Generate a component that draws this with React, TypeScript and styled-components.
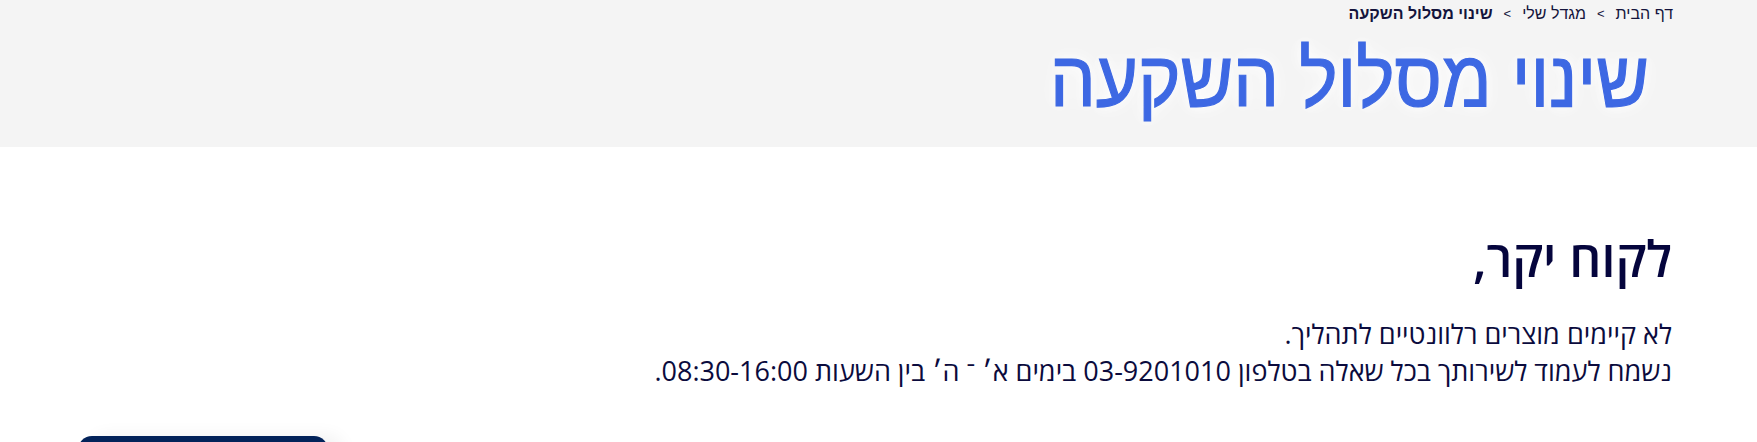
import styled, { createGlobalStyle } from 'styled-components';

const GlobalStyle = createGlobalStyle`
body {
  margin: 0;
  direction: rtl;
  background: #ffffff;
  font-family: "Open Sans", "Liberation Sans", sans-serif;
  color: #0b0b3d;
}
`;

const HeaderStyle = styled.header`
height: 147px;
padding: 0 84px;
background: #f4f4f4;
box-sizing: border-box;
overflow: hidden;
`;

const BreadcrumbsStyle = styled.nav`
display: flex;
align-items: center;
gap: 11px;
padding-top: 4px;
font-family: "Liberation Sans", sans-serif;
font-size: 16px;
line-height: 20px;
color: #14143c;
`;

const CrumbStyle = styled.span<{ $current?: boolean }>`
font-weight: ${({ $current }) => ($current ? 700 : 400)};
`;

const SeparatorStyle = styled.span`
font-size: 13px;
`;

const PageTitleStyle = styled.h1`
margin: 10px 24px 0 0;
font-family: "Liberation Sans", sans-serif;
font-size: 79px;
font-weight: 400;
line-height: 90px;
color: #3d68e3;
-webkit-text-stroke: 1.2px #3d68e3;
text-shadow: 0 0 12px #ffffff, 0 0 22px #ffffff;
transform: scaleX(0.915);
transform-origin: right center;
`;

const MainStyle = styled.main`
padding: 0 85px 0 78px;
`;

const GreetingStyle = styled.h2`
margin: 78px 0 0;
font-size: 50px;
font-weight: 600;
line-height: 66px;
color: #05053d;
`;

const MessageStyle = styled.div`
margin-top: 24px;
font-size: 27px;
line-height: 37px;
`;

const ButtonRowStyle = styled.div`
display: flex;
justify-content: flex-end;
margin-top: 47px;
`;

const ButtonStyle = styled.button`
box-sizing: border-box;
width: 250px;
height: 56px;
border: none;
border-radius: 14px;
background: #03235a;
color: #ffffff;
font-family: inherit;
font-size: 18px;
box-shadow: 14px 0 18px rgba(0, 0, 0, 0.06);
`;

const App = () => (
  <>
    <GlobalStyle />
    <HeaderStyle>
      <BreadcrumbsStyle>
        <CrumbStyle>דף הבית</CrumbStyle>
        <SeparatorStyle>&gt;</SeparatorStyle>
        <CrumbStyle>מגדל שלי</CrumbStyle>
        <SeparatorStyle>&gt;</SeparatorStyle>
        <CrumbStyle $current>שינוי מסלול השקעה</CrumbStyle>
      </BreadcrumbsStyle>
      <PageTitleStyle>שינוי מסלול השקעה</PageTitleStyle>
    </HeaderStyle>
    <MainStyle>
      <GreetingStyle>לקוח יקר,</GreetingStyle>
      <MessageStyle>
        <div>לא קיימים מוצרים רלוונטיים לתהליך.</div>
        <div>נשמח לעמוד לשירותך בכל שאלה בטלפון 03-9201010 בימים א׳ ־ ה׳ בין השעות 08:30-16:00.</div>
      </MessageStyle>
      <ButtonRowStyle>
        <ButtonStyle>חזרה לדף הבית</ButtonStyle>
      </ButtonRowStyle>
    </MainStyle>
  </>
);

export default App;
